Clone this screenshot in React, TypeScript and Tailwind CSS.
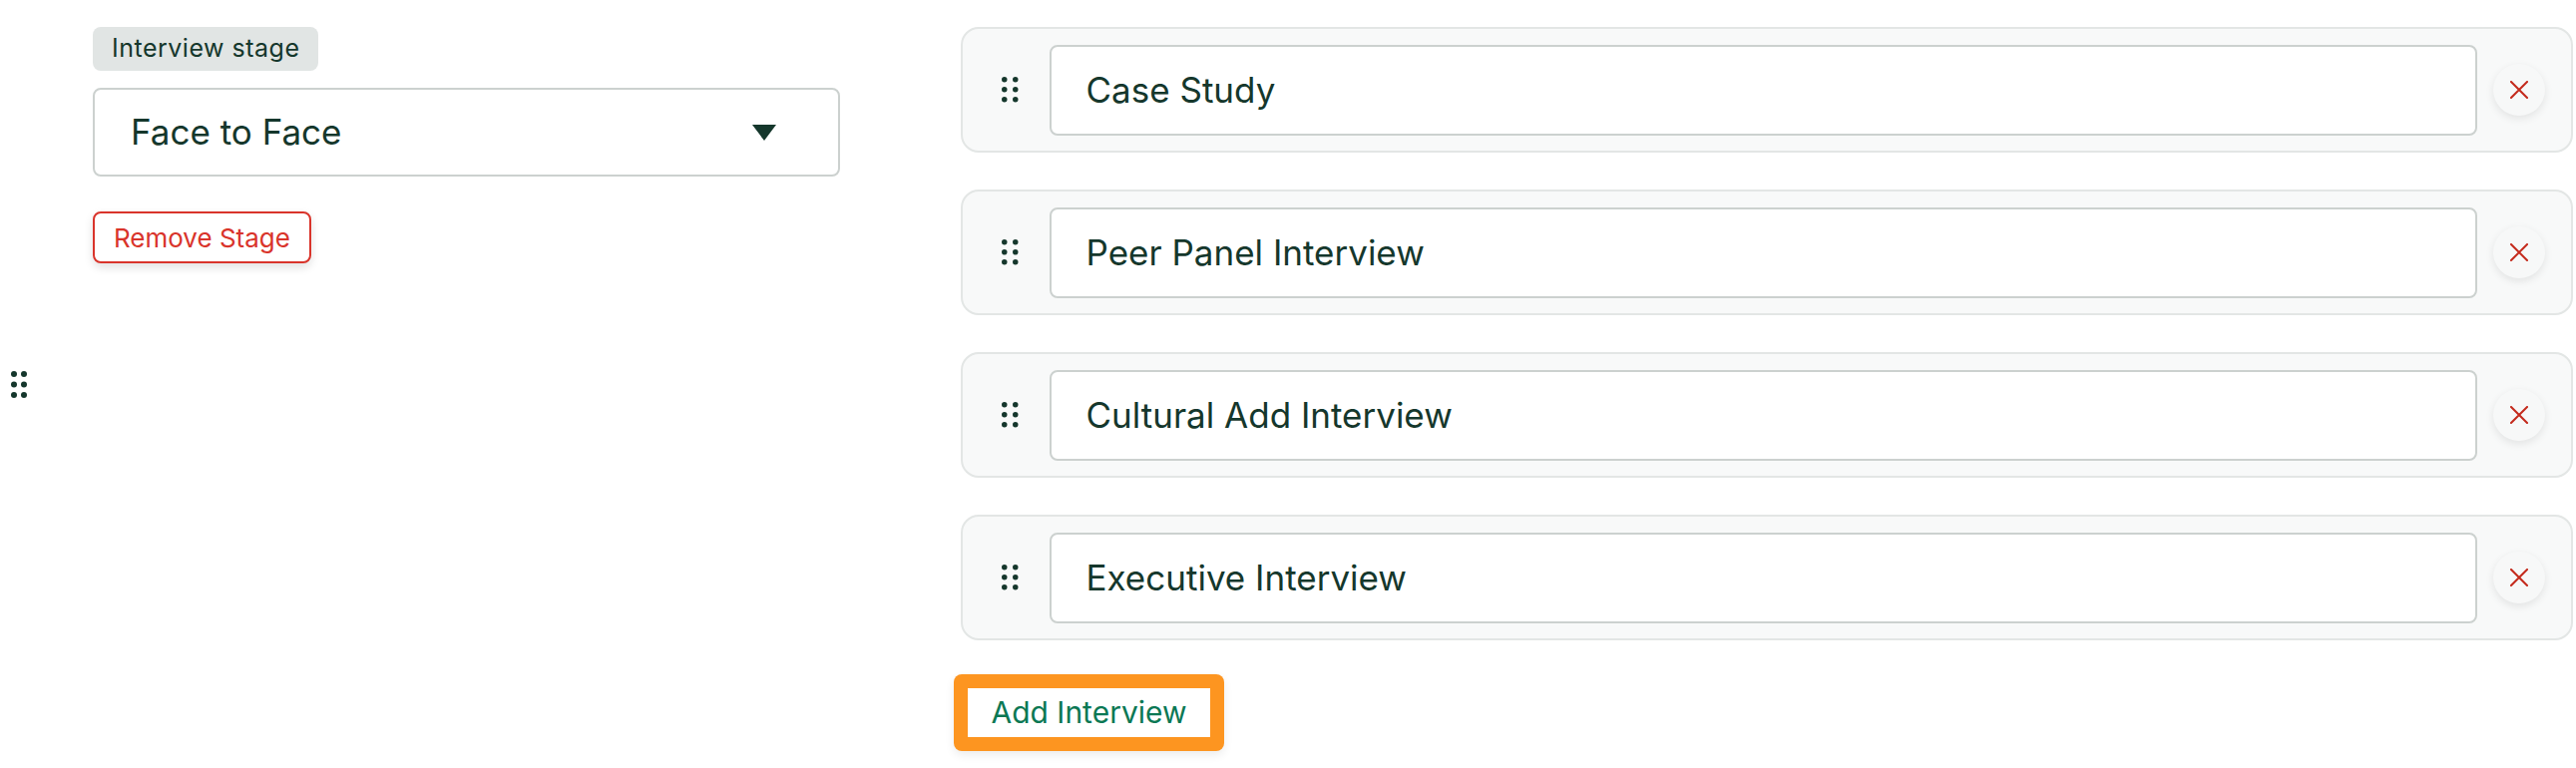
type Interview = {
    id: number;
    name: string;
};

const interviews: Interview[] = [
    { id: 1, name: "Case Study" },
    { id: 2, name: "Peer Panel Interview" },
    { id: 3, name: "Cultural Add Interview" },
    { id: 4, name: "Executive Interview" },
];

function DragHandle({ size }: { size: "lg" | "sm" }) {
    const r = size === "lg" ? 3 : 2.75;
    const dx = size === "lg" ? 10 : 11;
    const dy = size === "lg" ? 10.5 : 10;
    const w = dx + r * 2;
    const h = dy * 2 + r * 2;
    return (
        <svg width={w} height={h} viewBox={`0 0 ${w} ${h}`} className="shrink-0">
            {[0, 1, 2].map((row) =>
                [0, 1].map((col) => (
                    <circle
                        key={`${row}-${col}`}
                        cx={r + col * dx}
                        cy={r + row * dy}
                        r={r}
                        fill="#15372c"
                    />
                ))
            )}
        </svg>
    );
}

function InterviewCard({ name }: { name: string }) {
    return (
        <div className="flex h-[126px] items-center rounded-[18px] border-2 border-[#e3e6e5] bg-[#f8f9f9] pl-[39px] pr-[26px]">
            <DragHandle size="sm" />
            <div className="ml-[31px] flex h-[91px] flex-1 items-center rounded-lg border-2 border-[#ccd1cf] bg-white pl-[35px] text-[35px] text-[#15372c]">
                {name}
            </div>
            <button className="ml-4 flex h-[52px] w-[52px] items-center justify-center rounded-full bg-[#f7f8f8] shadow-[0_3px_8px_rgba(0,0,0,0.09)]">
                <svg width="18" height="18" viewBox="0 0 18 18">
                    <path
                        d="M1 1 L17 17 M17 1 L1 17"
                        stroke="#c42a1c"
                        strokeWidth="2"
                        strokeLinecap="square"
                    />
                </svg>
            </button>
        </div>
    );
}

export default function App() {
    return (
        <div
            className="flex h-[770px] w-[2582px] items-center bg-white pl-[11px]"
            style={{ fontFamily: "Inter, 'Noto Sans', sans-serif" }}
        >
            <DragHandle size="lg" />
            <div className="ml-[66px] flex h-full items-start pt-[27px]">
                <div className="flex w-[749px] flex-col items-start">
                    <span className="flex h-[44px] items-center rounded-lg bg-[#e1e5e4] px-[19px] text-[25px] tracking-[0.02em] text-[#15372c]">
                        Interview stage
                    </span>
                    <div className="mt-[17px] flex h-[89px] w-full items-center justify-between rounded-lg border-2 border-[#ccd1cf] bg-white pl-[36px] pr-[62px]">
                        <span className="text-[35px] text-[#15372c]">Face to Face</span>
                        <svg width="24" height="16" viewBox="0 0 24 16">
                            <path d="M0 0 H24 L12 16 Z" fill="#15372c" />
                        </svg>
                    </div>
                    <button className="mt-[35px] flex h-[52px] items-center rounded-lg border-2 border-[#d9342b] bg-white px-[19px] text-[26px] text-[#d9342b] shadow-[0_4px_10px_rgba(0,0,0,0.12)]">
                        Remove Stage
                    </button>
                </div>
                <div className="ml-[121px] flex w-[1616px] flex-col items-start">
                    <div className="flex w-full flex-col gap-[37px]">
                        {interviews.map((item) => (
                            <InterviewCard key={item.id} name={item.name} />
                        ))}
                    </div>
                    <div className="-ml-[7px] mt-[34px] rounded-lg bg-[#fd9520] p-[14px] shadow-[0_4px_10px_rgba(0,0,0,0.08)]">
                        <button className="flex h-[49px] w-[243px] items-center justify-center bg-white text-[30px] text-[#0b7854]">
                            Add Interview
                        </button>
                    </div>
                </div>
            </div>
        </div>
    );
}
